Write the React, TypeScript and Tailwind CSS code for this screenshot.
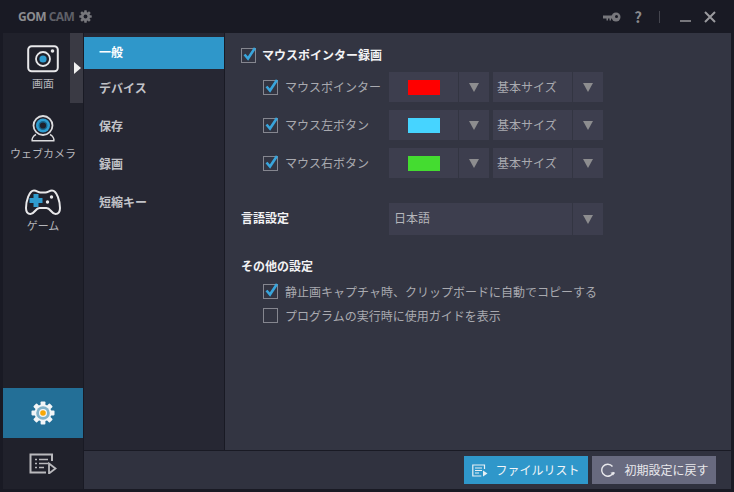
const font = { fontFamily: '"Noto Sans CJK JP", "Noto Sans", sans-serif' };

const menuItems = ["一般", "デバイス", "保存", "録画", "短縮キー"];

const pointerRows = [
  { label: "マウスポインター", swatch: "bg-[#ff0000]" },
  { label: "マウス左ボタン", swatch: "bg-[#46d4ff]" },
  { label: "マウス右ボタン", swatch: "bg-[#44dc30]" },
];

function Gear({ size, color, hole, holeRadius, dot }: { size: number; color: string; hole: string; holeRadius: number; dot?: string }) {
  return (
    <svg width={size} height={size} viewBox="0 0 24 24">
      {[0, 45, 90, 135].map((angle) => (
        <rect key={angle} x="9.600" y="0.500" width="4.800" height="23" rx="0.800" fill={color} transform={`rotate(${angle} 12 12)`} />
      ))}
      <circle cx="12" cy="12" r="8.500" fill={color} />
      <circle cx="12" cy="12" r={holeRadius} fill={hole} />
      {dot && (
        <>
          <circle cx="12" cy="12" r="4" fill="#f2f5f7" />
          <circle cx="12" cy="12" r="2.800" fill={dot} />
        </>
      )}
    </svg>
  );
}

function CheckBox({ checked = false }: { checked?: boolean }) {
  return (
    <span className="relative block h-[15px] w-[15px] shrink-0 border border-[#85868f]">
      {checked && (
        <svg className="absolute left-[1px] top-[-2px]" width="14" height="14" viewBox="0 0 14 14" fill="none">
          <path d="M1.500 7.500L5 11.500 12 1" stroke="#39a5dc" strokeWidth="2.600" />
        </svg>
      )}
    </span>
  );
}

function Arrow() {
  return (
    <span className="ml-px flex h-full w-[30px] shrink-0 items-center justify-center bg-[#3d3e4e]">
      <svg width="10" height="9" viewBox="0 0 10 9">
        <path d="M0 0h10L5 9z" fill="#8d8d8f" />
      </svg>
    </span>
  );
}

function PointerRow({ label, swatch }: { label: string; swatch: string }) {
  return (
    <div className="flex h-[30px] items-center">
      <div className="ml-[22px] flex w-[126px] items-center gap-[7px]">
        <CheckBox checked />
        <span className="text-xs whitespace-nowrap text-[#a9aab0]">{label}</span>
      </div>
      <div className="flex h-full w-[100px] shrink-0">
        <span className="flex h-full w-[69px] items-center justify-center bg-[#3d3e4e]">
          <span className={`h-[15px] w-[32px] ${swatch}`} />
        </span>
        <Arrow />
      </div>
      <div className="ml-1 flex h-full">
        <span className="flex h-full w-[79px] items-center bg-[#3d3e4e] pl-1 text-xs text-[#a9aab0]">基本サイズ</span>
        <Arrow />
      </div>
    </div>
  );
}

export default function App() {
  return (
    <div style={font} className="flex h-[492px] w-[734px] flex-col overflow-hidden bg-[#191a24]">
      <header className="flex h-[33px] shrink-0 items-center pl-[18px] pr-[18px]">
        <span className="text-[12px] font-bold tracking-[-0.5px] text-[#8c8c90]" style={{ fontFamily: '"Open Sans", sans-serif' }}>
          GOM <span className="text-[#5f6068]">CAM</span>
        </span>
        <span className="ml-[5px]">
          <Gear size={13} color="#77777c" hole="#191a24" holeRadius={3.500} />
        </span>
        <div className="ml-auto flex items-center">
          <svg width="18" height="10" viewBox="0 0 18 10">
            <path d="M0 3.500h10v3H8v2H6.500v-2H5v2H3.500v-2H0z" fill="#77777c" />
            <circle cx="13" cy="5" r="4.500" fill="#77777c" />
            <circle cx="13.500" cy="4.500" r="1.500" fill="#191a24" />
          </svg>
          <span className="ml-[13px] text-[15px] leading-none font-bold text-[#8a8a8e]">?</span>
          <span className="ml-[17px] h-[12px] w-px bg-[#44454e]" />
          <span className="ml-5 mt-[8px] h-[2px] w-[11px] bg-[#77777c]" />
          <svg className="ml-[13px]" width="12" height="12" viewBox="0 0 12 12">
            <path d="M1 1l10 10M11 1L1 11" stroke="#9a9a9e" strokeWidth="2" />
          </svg>
        </div>
      </header>

      <div className="mb-[3px] flex min-h-0 flex-1 pl-[3px] pr-[3px]">
        <nav className="flex w-[80px] shrink-0 flex-col bg-[#20212b]">
          <div className="relative flex h-[70px] flex-col items-center pt-[12px]">
            <svg width="32" height="28" viewBox="0 0 32 28" fill="none">
              <rect x="1.200" y="1.200" width="29.600" height="25" rx="3.500" stroke="#e8e8ea" strokeWidth="2" />
              <circle cx="16" cy="14" r="7" stroke="#e8e8ea" strokeWidth="1.800" />
              <circle cx="16" cy="14" r="3.600" fill="#2f9ccf" />
              <circle cx="25.500" cy="6" r="1.800" fill="#e8e8ea" />
            </svg>
            <span className="mt-[2px] text-[11px] leading-[16px] text-[#b5b6bb]">画面</span>
            <span className="absolute right-0 top-0 flex h-full w-[13px] items-center bg-[#3a3a44] pl-[4px]">
              <svg width="7" height="12" viewBox="0 0 7 12"><path d="M0 0l7 6-7 6z" fill="#f0f0f0" /></svg>
            </span>
          </div>
          <div className="flex h-[70px] flex-col items-center pt-[12px]">
            <svg width="24" height="27" viewBox="0 0 24 27" fill="none">
              <circle cx="12" cy="10.500" r="9.500" stroke="#dcdcde" strokeWidth="1.800" />
              <circle cx="12" cy="10.500" r="7" fill="#2f9ccf" />
              <circle cx="12" cy="10.500" r="3.800" fill="#20212b" stroke="#17688f" strokeWidth="1.400" />
              <path d="M5 19.500C2 21 .8 24 1.200 25.800h21.600c.4-1.800-.8-4.800-3.800-6.300" stroke="#dcdcde" strokeWidth="1.600" />
            </svg>
            <span className="mt-[3px] text-[11px] leading-[16px] whitespace-nowrap text-[#b5b6bb]">ウェブカメラ</span>
          </div>
          <div className="flex h-[70px] flex-col items-center pt-[15px]">
            <svg width="36" height="28" viewBox="0 0 36 28" fill="none">
              <path d="M9 2.500c3 0 4 2 6.500 2h5c2.500 0 3.500-2 6.500-2 5 0 8 11 8 17.500 0 4-2 6-4.500 6-4 0-5-6-9-6h-7c-4 0-5 6-9 6C3 26 1 24 1 20 1 13.500 4 2.500 9 2.500z" stroke="#e8e8ea" strokeWidth="2" />
              <path d="M8.500 6h5v4h4v5h-4v4h-5v-4h-4v-5h4z" fill="#2f9ccf" />
              <circle cx="26.500" cy="9" r="1.700" fill="#e8e8ea" />
              <circle cx="22.500" cy="14" r="1.700" fill="#e8e8ea" />
            </svg>
            <span className="mt-[1px] text-[11px] leading-[16px] text-[#b5b6bb]">ゲーム</span>
          </div>
          <div className="mt-auto flex h-[50px] items-center justify-center bg-[#236f97]">
            <Gear size={24} color="#f2f5f7" hole="#7fb1c9" holeRadius={6.800} dot="#f9a806" />
          </div>
          <div className="flex h-[51px] items-center justify-center">
            <svg width="28" height="21" viewBox="0 0 28 21" fill="none">
              <path d="M23 8V1.500H1.500v18H17" stroke="#b9b9bd" strokeWidth="2" />
              <path d="M6 6.500h2M10 6.500h9M6 10.500h2M10 10.500h9M6 14.500h2M10 14.500h5" stroke="#b9b9bd" strokeWidth="1.600" />
              <path d="M20 10.500l6.500 5-6.500 5z" stroke="#b9b9bd" strokeWidth="1.800" />
            </svg>
          </div>
        </nav>

        <div className="flex min-w-0 flex-1 flex-col border-l border-[#191a24]">
          <div className="flex min-h-0 flex-1">
            <aside className="flex w-[141px] shrink-0 flex-col gap-[6px] border-r border-[#191a24] bg-[#262733] pt-1">
              <div className="-mb-px flex h-[32px] w-[140px] items-center bg-[#2f97ca] pb-[2px] pl-[15px] text-xs font-bold text-white">
                {menuItems[0]}
              </div>
              {menuItems.slice(1).map((item) => (
                <div key={item} className="flex h-[32px] w-[140px] items-center pb-[4px] pl-[15px] text-xs font-bold text-[#c2c3c8]">
                  {item}
                </div>
              ))}
            </aside>

            <main className="flex min-w-0 flex-1 flex-col bg-[#333542] pl-4 pt-[14px]">
              <label className="flex items-center gap-[6px]">
                <CheckBox checked />
                <span className="text-xs font-bold text-[#f2f2f4]">マウスポインター録画</span>
              </label>
              <div className="mt-[9px] flex flex-col gap-2">
                {pointerRows.map((row) => (
                  <PointerRow key={row.label} {...row} />
                ))}
              </div>
              <div className="mt-[25px] flex h-[32px] items-center">
                <span className="w-[148px] shrink-0 pb-[3px] text-xs font-bold text-[#f2f2f4]">言語設定</span>
                <span className="flex h-full w-[183px] items-center bg-[#3d3e4e] pb-[2px] pl-[5px] text-xs text-[#b5b6bb]">日本語</span>
                <Arrow />
              </div>
              <div className="mt-[22px] text-xs leading-[18px] font-bold text-[#f2f2f4]">その他の設定</div>
              <div className="mt-[9px] ml-[22px] flex flex-col gap-[9px]">
                <label className="flex items-center gap-[7px]">
                  <CheckBox checked />
                  <span className="text-xs leading-[15px] text-[#a9aab0]">静止画キャプチャ時、クリップボードに自動でコピーする</span>
                </label>
                <label className="flex items-center gap-[7px]">
                  <CheckBox />
                  <span className="text-xs leading-[15px] text-[#a9aab0]">プログラムの実行時に使用ガイドを表示</span>
                </label>
              </div>
            </main>
          </div>

          <footer className="flex h-[39px] shrink-0 items-center justify-end gap-1 border-t border-[#191a24] bg-[#30323f] pr-[15px]">
            <button className="flex h-[28px] w-[124px] items-center justify-center gap-[7px] bg-[#2f97ca] text-xs text-[#f0f4f7]">
              <svg width="16" height="13" viewBox="0 0 16 13" fill="none">
                <path d="M12.500 5V1H.8v11h8.500" stroke="#e8f0f4" strokeWidth="1.200" />
                <path d="M3 4h7M3 6.500h7M3 9h4" stroke="#e8f0f4" strokeWidth="1.100" />
                <path d="M11 6.500l4.500 3-4.500 3z" fill="#e8f0f4" />
              </svg>
              ファイルリスト
            </button>
            <button className="flex h-[28px] w-[124px] items-center justify-center gap-[9px] bg-[#686a7f] pl-[2px] text-xs text-[#e8e8ec]">
              <svg width="14" height="14" viewBox="0 0 14 14" fill="none">
                <path d="M11.500 3.500A6 6 0 1 0 12.500 9" stroke="#e8e8ec" strokeWidth="1.400" />
                <path d="M9.500 9.500h5L12 12.500z" fill="#e8e8ec" />
              </svg>
              初期設定に戻す
            </button>
          </footer>
        </div>
      </div>
    </div>
  );
}
